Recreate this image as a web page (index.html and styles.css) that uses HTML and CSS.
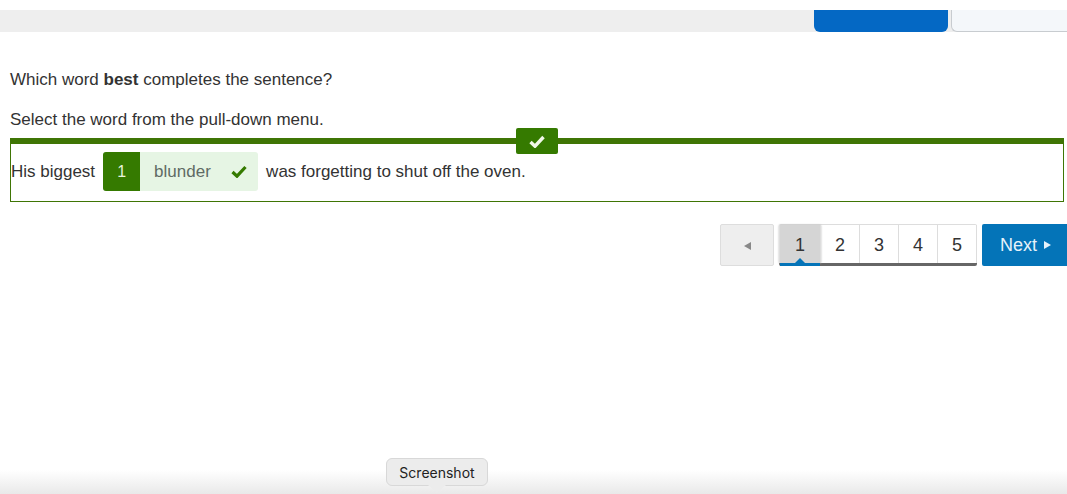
FILE: index.html
```html
<!DOCTYPE html>
<html lang="en">
<head>
    <meta charset="UTF-8">
    <title>Review</title>
    <link rel="stylesheet" href="styles.css">
</head>
<body>
    <div class="toolbar">
        <button class="close-btn">Close Review</button>
        <button class="print-btn">Print Review</button>
    </div>

    <div class="content">
        <p class="prompt">Which word <b>best</b> completes the sentence?</p>
        <p class="prompt prompt-second">Select the word from the pull-down menu.</p>

        <div class="answer-box">
            <div class="correct-tab">
                <svg width="16" height="13" viewBox="0 0 16 13"><path d="M1.5 7l4.5 4.2L14.5 2" fill="none" stroke="#f1f8e8" stroke-width="3.4"/></svg>
            </div>
            <div class="answer-line">
                <span>His biggest</span>
                <span class="choice">
                    <span class="choice-num">1</span>
                    <span class="choice-word">blunder</span>
                    <svg class="choice-check" width="16" height="13" viewBox="0 0 16 13"><path d="M1.5 7l4.5 4.2L14.5 2" fill="none" stroke="#357a00" stroke-width="3.2"/></svg>
                </span>
                <span>was forgetting to shut off the oven.</span>
            </div>
        </div>

        <div class="pager">
            <button class="prev-btn"><span class="arrow-left"></span></button>
            <div class="pages">
                <div class="page page-active">1</div>
                <div class="page">2</div>
                <div class="page">3</div>
                <div class="page">4</div>
                <div class="page">5</div>
            </div>
            <button class="next-btn">Next <span class="arrow-right"></span></button>
        </div>
    </div>

    <div class="dock-fade"></div>
    <div class="tooltip">Screenshot</div>
</body>
</html>
```

FILE: styles.css
```css
html, body {
    height: 100%;
}
body {
    margin: 0;
    font-family: "Liberation Sans", Arial, sans-serif;
    color: #333;
    background-color: #fff;
    overflow: hidden;
}
.toolbar {
    display: flex;
    justify-content: flex-end;
    align-items: flex-end;
    gap: 3px;
    height: 22px;
    margin-top: 10px;
    background-color: #eee;
    overflow: hidden;
}
.toolbar button {
    height: 40px;
    font-family: Lato, sans-serif;
    font-size: 14px;
    padding: 0;
    padding-bottom: 20px;
}
.close-btn {
    width: 134px;
    color: #fff;
    background-color: #0468c4;
    border: 0;
    border-radius: 0 0 6px 6px;
}
.print-btn {
    width: 116px;
    color: #444;
    background-color: #f4f7fa;
    border: 1px solid #c8ccd0;
    border-top: 0;
    border-right: 0;
    border-radius: 0 0 0 6px;
}
.content {
    padding: 0 3px 0 10px;
}
.prompt {
    margin: 38px 0 0;
    font-size: 17px;
    line-height: 20px;
}
.prompt-second {
    margin-top: 20px;
}
.answer-box {
    position: relative;
    margin-top: 8px;
    border: 1px solid #3f7505;
    border-top: 6px solid #3f7505;
    height: 57px;
}
.correct-tab {
    position: absolute;
    top: -16px;
    left: 505px;
    width: 42px;
    height: 26px;
    display: flex;
    align-items: center;
    justify-content: center;
    background-color: #357a00;
    border-radius: 2px;
}
.answer-line {
    display: flex;
    align-items: center;
    gap: 8px;
    height: 39px;
    margin-top: 8px;
    font-size: 17px;
}
.choice {
    display: flex;
    align-items: center;
    width: 155px;
    height: 39px;
    background-color: #e6f5e4;
    border-radius: 3px;
}
.choice-num {
    width: 37px;
    height: 39px;
    line-height: 39px;
    text-align: center;
    font-size: 16px;
    color: #e8f3dc;
    background-color: #357a00;
    border-radius: 3px 0 0 3px;
}
.choice-word {
    margin-left: 14px;
    color: #5f6b64;
}
.choice-check {
    margin-left: 20px;
}
.pager {
    display: flex;
    justify-content: flex-end;
    margin: 22px -3px 0 0;
    height: 42px;
}
.prev-btn {
    width: 54px;
    height: 42px;
    padding: 0;
    margin-right: 5px;
    background-color: #eee;
    border: 1px solid #ddd;
    border-radius: 2px;
}
.arrow-left {
    display: inline-block;
    border-top: 4px solid transparent;
    border-bottom: 4px solid transparent;
    border-right: 7px solid #888;
}
.pages {
    display: flex;
    height: 42px;
    box-sizing: border-box;
    margin-right: 5px;
    border-top: 1px solid #ddd;
    border-bottom: 3px solid #666;
    border-radius: 2px;
    position: relative;
}
.page {
    width: 38px;
    border-right: 1px solid #ddd;
    text-align: center;
    font-size: 18px;
    line-height: 40px;
}
.page:first-child {
    border-left: 1px solid #ddd;
}
.page-active {
    position: relative;
    width: 40px;
    background-color: #d5d5d5;
    box-shadow: 0 0 2px #bbb;
}
.page-active::after {
    content: "";
    position: absolute;
    left: 0;
    right: 0;
    bottom: -3px;
    height: 3px;
    background-color: #0474b8;
}
.page-active::before {
    content: "";
    position: absolute;
    left: 15px;
    bottom: 0;
    border-left: 5px solid transparent;
    border-right: 5px solid transparent;
    border-bottom: 5px solid #0474b8;
}
.next-btn {
    width: 85px;
    height: 42px;
    padding: 0 0 0 2px;
    color: #e6f2fa;
    font-family: "Liberation Sans", Arial, sans-serif;
    font-size: 18px;
    background-color: #0474b8;
    border: 0;
    border-radius: 2px 0 0 2px;
}
.arrow-right {
    display: inline-block;
    margin-left: 2px;
    vertical-align: 2px;
    border-top: 4px solid transparent;
    border-bottom: 4px solid transparent;
    border-left: 7px solid #e6f2fa;
}
.dock-fade {
    position: absolute;
    left: 0;
    right: 0;
    bottom: 0;
    height: 24px;
    background: linear-gradient(to bottom, #fff, #e9e9e9);
}
.tooltip {
    position: absolute;
    left: 386px;
    top: 458px;
    width: 102px;
    height: 28px;
    box-sizing: border-box;
    text-align: center;
    font-family: Inter, sans-serif;
    font-size: 14px;
    line-height: 27px;
    color: #222;
    background-color: #ececec;
    border: 1px solid #d8d8d8;
    border-radius: 6px;
}
.tooltip::after {
    content: "";
    position: absolute;
    left: 41px;
    bottom: -8px;
    border-left: 9px solid transparent;
    border-right: 9px solid transparent;
    border-top: 8px solid #ececec;
}
```
